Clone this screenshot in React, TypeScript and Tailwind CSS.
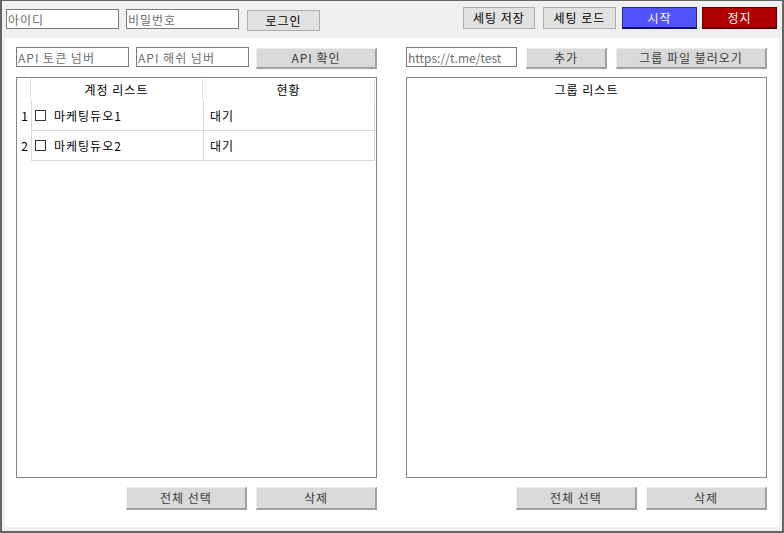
import React from "react";

const font = "font-['Noto_Sans_CJK_KR','Noto_Sans',sans-serif]";

function TextBox({ ph, w, tr = "tracking-[1px]" }: { ph: string; w: string; tr?: string }) {
  return (
    <input
      readOnly
      placeholder={ph}
      className={`block ${w} h-[20px] shrink-0 border border-[#7a7a7a] bg-white pl-[1px] text-[12px] leading-none outline-none placeholder:text-[#6d6d6d] ${tr} ${font}`}
    />
  );
}

function FlatBtn({ label, w, h = "h-[21px]" }: { label: string; w: string; h?: string }) {
  return (
    <div
      className={`${w} ${h} shrink-0 flex items-center justify-center bg-[#d9d9d9] border-t border-l border-t-[#ececec] border-l-[#ececec] border-r-2 border-b-2 border-r-[#a0a0a0] border-b-[#a0a0a0] text-[12px] leading-none text-[#3c3c3c]`}
    >
      {label}
    </div>
  );
}

function TopBtn({ label, w, cls }: { label: string; w: string; cls: string }) {
  return (
    <div className={`${w} h-[22px] shrink-0 flex items-center justify-center text-[12px] leading-none ${cls}`}>
      {label}
    </div>
  );
}

export default function App() {
  const rows = [
    { n: "1", name: "마케팅듀오1", st: "대기" },
    { n: "2", name: "마케팅듀오2", st: "대기" },
  ];
  return (
    <div
      className={`w-[784px] h-[533px] bg-[#f0f0f0] border-t border-l-2 border-r-2 border-b-2 border-[#646464] flex flex-col text-black tracking-[1px] ${font}`}
    >
      {/* top bar */}
      <div className="h-[37px] shrink-0 flex items-start pl-[4px] pr-[5px]">
        <div className="mt-[8px] flex items-start">
          <TextBox ph="아이디" w="w-[113px]" />
          <div className="ml-[7px] flex">
            <TextBox ph="비밀번호" w="w-[113px]" />
          </div>
          <div className="ml-[8px] mt-[1px] w-[73px] h-[21px] flex items-center justify-center bg-[#e1e1e1] border border-[#adadad] text-[12px] leading-none">
            로그인
          </div>
        </div>
        <div className="ml-auto mt-[6px] flex items-start">
          <TopBtn label="세팅 저장" w="w-[72px]" cls="bg-[#e1e1e1] border border-[#adadad]" />
          <div className="ml-[8px] flex">
            <TopBtn label="세팅 로드" w="w-[73px]" cls="bg-[#e1e1e1] border border-[#adadad]" />
          </div>
          <div className="ml-[6px] flex">
            <TopBtn
              label="시작"
              w="w-[75px]"
              cls="bg-[#5252ff] text-white border border-[#2a2a8a] border-b-2 border-b-[#14145a]"
            />
          </div>
          <div className="ml-[5px] flex">
            <TopBtn
              label="정지"
              w="w-[75px]"
              cls="bg-[#b00000] text-white border border-[#5a0000] border-b-2 border-b-[#400000]"
            />
          </div>
        </div>
      </div>

      {/* main white area */}
      <div className="ml-[3px] mr-[3px] h-[489px] shrink-0 bg-white flex pl-[11px] pr-[10px] pt-[9px] gap-[29px]">
        {/* left column */}
        <div className="w-[361px] flex flex-col">
          <div className="flex items-start h-[22px]">
            <TextBox ph="API 토큰 넘버" w="w-[113px]" />
            <div className="ml-[7px] flex">
              <TextBox ph="API 해쉬 넘버" w="w-[113px]" />
            </div>
            <div className="ml-[7px] mt-[1px] flex">
              <FlatBtn label="API 확인" w="w-[121px]" />
            </div>
          </div>
          <div className="mt-[8px] h-[401px] border border-[#828790] bg-white flex flex-col">
            <div className="flex h-[23px] shrink-0">
              <div className="w-[14px] border-r border-[#e3e3e3]" />
              <div className="w-[172px] border-r border-[#e3e3e3] flex items-center justify-center text-[12px] leading-none">
                계정 리스트
              </div>
              <div className="w-[172px] border-r border-[#e3e3e3] flex items-center justify-center text-[12px] leading-none">
                현황
              </div>
            </div>
            {rows.map((r) => (
              <div key={r.n} className="flex h-[30px] shrink-0">
                <div className="w-[14px] flex items-center justify-end pr-[2px] text-[12px] leading-none">
                  {r.n}
                </div>
                <div className="w-[172px] border-l border-b border-[#d8d8d8] flex items-center pl-[3px] text-[12px] leading-none">
                  <span className="w-[11px] h-[11px] border border-[#333333] bg-white shrink-0" />
                  <span className="ml-[8px]">{r.name}</span>
                </div>
                <div className="w-[172px] border-l border-r border-b border-[#d8d8d8] flex items-center pl-[6px] text-[12px] leading-none">
                  {r.st}
                </div>
              </div>
            ))}
          </div>
          <div className="mt-[9px] flex justify-end gap-[9px]">
            <FlatBtn label="전체 선택" w="w-[121px]" h="h-[23px]" />
            <FlatBtn label="삭제" w="w-[121px]" h="h-[23px]" />
          </div>
        </div>

        {/* right column */}
        <div className="w-[361px] flex flex-col">
          <div className="flex items-start h-[22px]">
            <TextBox ph="https://t.me/test" w="w-[111px]" tr="tracking-normal" />
            <div className="ml-[9px] mt-[1px] flex">
              <FlatBtn label="추가" w="w-[81px]" />
            </div>
            <div className="ml-[9px] mt-[1px] flex">
              <FlatBtn label="그룹 파일 불러오기" w="w-[151px]" />
            </div>
          </div>
          <div className="mt-[8px] h-[401px] border border-[#828790] bg-white flex flex-col">
            <div className="h-[23px] flex items-center justify-center text-[12px] leading-none">
              그룹 리스트
            </div>
          </div>
          <div className="mt-[9px] flex justify-end gap-[9px]">
            <FlatBtn label="전체 선택" w="w-[121px]" h="h-[23px]" />
            <FlatBtn label="삭제" w="w-[121px]" h="h-[23px]" />
          </div>
        </div>
      </div>
    </div>
  );
}
